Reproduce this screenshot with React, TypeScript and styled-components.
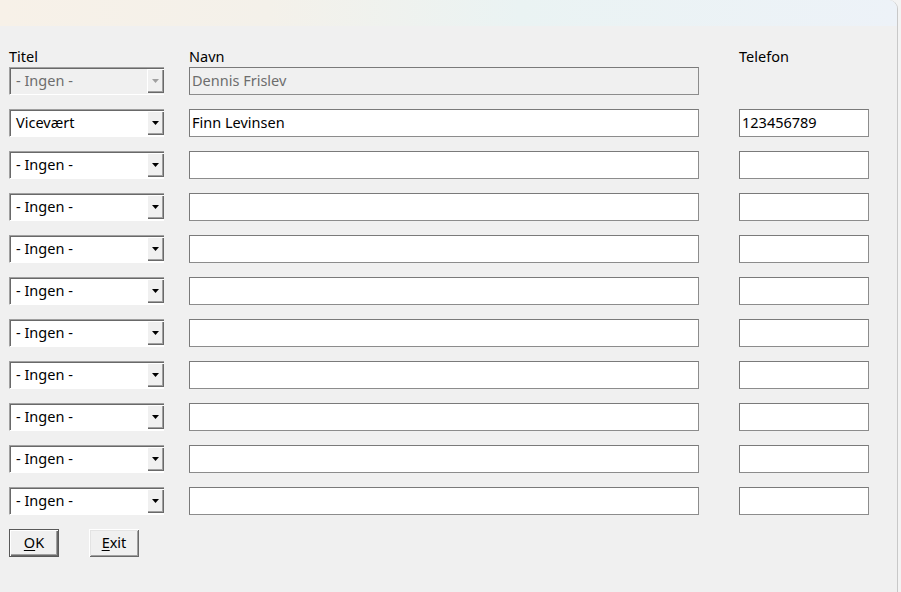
/**
 * Kontaktpersoner dialog
 */
import * as React from 'react';
import styled, { createGlobalStyle, css } from 'styled-components';

const GlobalStyle = createGlobalStyle`
  html, body {
    margin: 0;
    padding: 0;
    background: #f3f3f3;
  }
  body {
    font-family: "Noto Sans", "Open Sans", sans-serif;
    font-size: 14.5px;
    color: #000;
  }
`;

interface DisabledProps {
  $disabled?: boolean;
}

const Screen = styled.div`
  width: 901px;
  height: 592px;
  display: flex;
  overflow: hidden;
`;

const Window = styled.div`
  width: 897px;
  height: 592px;
  display: flex;
  flex-direction: column;
  background: #f0f0f0;
  border-top-right-radius: 9px;
  border-right: 1px solid #c8c8c8;
  overflow: hidden;
`;

const TitleBar = styled.div`
  height: 26px;
  flex: none;
  background: linear-gradient(90deg, #f7f1e8 0%, #f4f1ea 30%, #eaf3f3 58%, #edf2f8 100%);
`;

const Body = styled.div`
  padding: 20px 0 0 9px;
  display: flex;
  flex-direction: column;
`;

const Columns = css`
  display: grid;
  grid-template-columns: 180px 550px 130px;
`;

const Header = styled.div`
  ${Columns};
  height: 21px;
  align-items: end;
`;

const Label = styled.div`
  line-height: 20px;
  padding-bottom: 2px;
`;

const Rows = styled.div`
  ${Columns};
  grid-auto-rows: 28px;
  row-gap: 14px;
`;

const Combo = styled.div<DisabledProps>`
  width: 155px;
  height: 28px;
  box-sizing: border-box;
  display: flex;
  align-items: stretch;
  border-top: 1px solid #a0a0a0;
  border-left: 1px solid #a0a0a0;
  border-bottom: 1px solid #ffffff;
  box-shadow: inset 1px 1px 0 #696969;
  padding: 1px 0 1px 1px;
  background: ${(p) => (p.$disabled ? '#f0f0f0' : '#ffffff')};
  color: ${(p) => (p.$disabled ? '#6d6d6d' : '#000')};
`;

const ComboText = styled.div`
  flex: 1;
  padding-left: 5px;
  line-height: 23px;
  white-space: nowrap;
`;

const DropButton = styled.div<DisabledProps>`
  width: 17px;
  flex: none;
  display: flex;
  align-items: center;
  justify-content: center;
  padding-right: 1px;
  box-sizing: border-box;
  background: #f0f0f0;
  box-shadow: inset 1px 1px 0 #ffffff, inset -1px -1px 0 #696969, inset -2px -2px 0 #a0a0a0;
  svg {
    fill: ${(p) => (p.$disabled ? '#a0a0a0' : '#000')};
  }
`;

const TextBox = styled.div<DisabledProps & { $width: number }>`
  width: ${(p) => p.$width}px;
  height: 28px;
  box-sizing: border-box;
  border: 1px solid #7a7a7a;
  border-right-color: #8c8c8c;
  border-bottom-color: #8c8c8c;
  padding: 0 2px;
  line-height: 24px;
  white-space: nowrap;
  background: ${(p) => (p.$disabled ? '#f0f0f0' : '#ffffff')};
  color: ${(p) => (p.$disabled ? '#6d6d6d' : '#000')};
`;

const Empty = styled.div``;

const Buttons = styled.div`
  display: flex;
  gap: 30px;
  margin-top: 14px;
`;

const Button = styled.div<{ $default?: boolean }>`
  width: 50px;
  height: 28px;
  box-sizing: border-box;
  display: flex;
  align-items: center;
  justify-content: center;
  background: #f0f0f0;
  line-height: 20px;
  padding-bottom: 2px;
  ${(p) =>
    p.$default
      ? css`
          border: 1px solid #595959;
          box-shadow: inset 1px 1px 0 #ffffff, inset -1px -1px 0 #696969, inset -2px -2px 0 #a0a0a0;
        `
      : css`
          box-shadow: inset 1px 1px 0 #ffffff, inset -1px -1px 0 #696969, inset 2px 2px 0 #e3e3e3, inset -2px -2px 0 #a0a0a0;
        `}
  u {
    text-decoration-thickness: 1px;
    text-underline-offset: 2px;
  }
`;

const Arrow = () => (
  <svg width="7" height="4" viewBox="0 0 7 4">
    <polygon points="0,0 7,0 3.5,4" />
  </svg>
);

type Row = { title: string; name: string; phone?: string; disabled?: boolean };

const rows: Row[] = [
  { title: '- Ingen -', name: 'Dennis Frislev', disabled: true },
  { title: 'Vicevært', name: 'Finn Levinsen', phone: '123456789' },
  ...Array.from({ length: 9 }, () => ({ title: '- Ingen -', name: '', phone: '' })),
];

export default function App() {
  return (
    <>
      <GlobalStyle />
      <Screen>
        <Window>
          <TitleBar />
          <Body>
            <Header>
              <Label>Titel</Label>
              <Label>Navn</Label>
              <Label>Telefon</Label>
            </Header>
            <Rows>
              {rows.map((r, i) => (
                <React.Fragment key={i}>
                  <Combo $disabled={r.disabled}>
                    <ComboText>{r.title}</ComboText>
                    <DropButton $disabled={r.disabled}>
                      <Arrow />
                    </DropButton>
                  </Combo>
                  <TextBox $width={510} $disabled={r.disabled}>
                    {r.name}
                  </TextBox>
                  {r.disabled ? <Empty /> : <TextBox $width={130}>{r.phone}</TextBox>}
                </React.Fragment>
              ))}
            </Rows>
            <Buttons>
              <Button $default>
                <span>
                  <u>O</u>K
                </span>
              </Button>
              <Button>
                <span>
                  <u>E</u>xit
                </span>
              </Button>
            </Buttons>
          </Body>
        </Window>
      </Screen>
    </>
  );
}
